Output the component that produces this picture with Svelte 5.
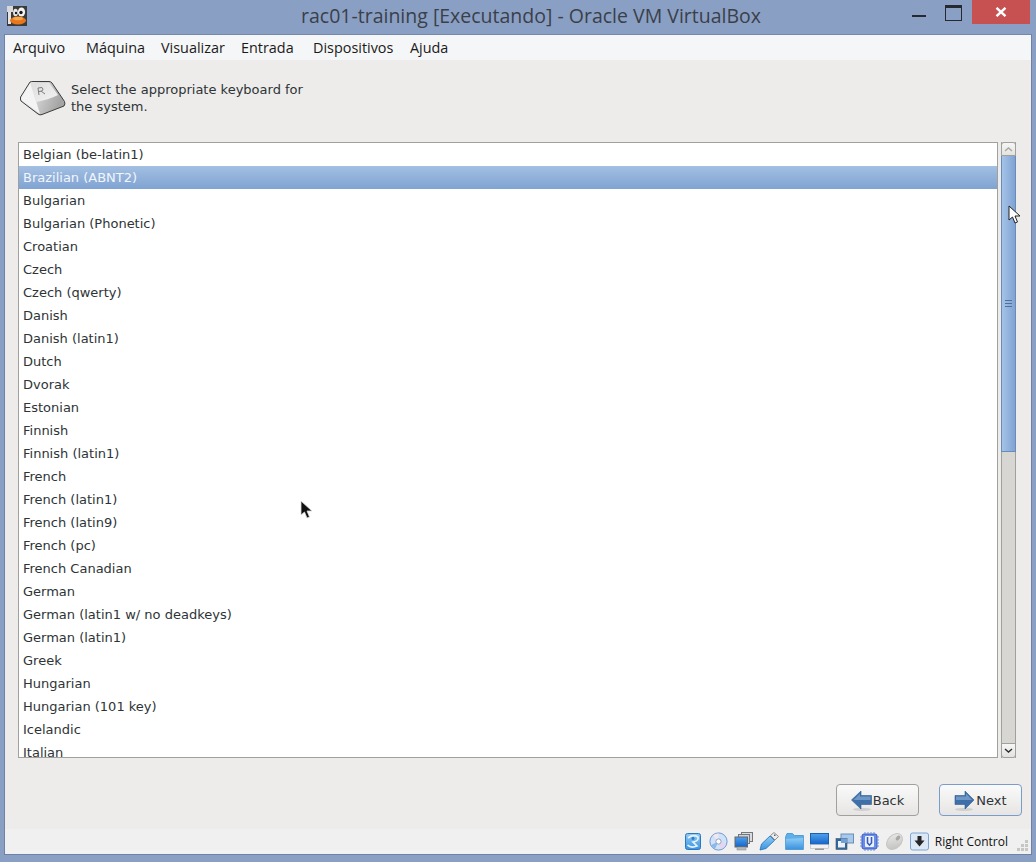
<script lang="ts">
    const layouts = [
        "Belgian (be-latin1)", "Brazilian (ABNT2)", "Bulgarian", "Bulgarian (Phonetic)", "Croatian",
        "Czech", "Czech (qwerty)", "Danish", "Danish (latin1)", "Dutch", "Dvorak", "Estonian", "Finnish",
        "Finnish (latin1)", "French", "French (latin1)", "French (latin9)", "French (pc)", "French Canadian",
        "German", "German (latin1 w/ no deadkeys)", "German (latin1)", "Greek", "Hungarian",
        "Hungarian (101 key)", "Icelandic", "Italian",
    ];
    const menus = [
        { label: "Arquivo", width: 73 },
        { label: "Máquina", width: 75 },
        { label: "Visualizar", width: 80 },
        { label: "Entrada", width: 72 },
        { label: "Dispositivos", width: 97 },
        { label: "Ajuda", width: 50 },
    ];
    let selected = $state(1);
</script>

<div class="frame">
    <header class="titlebar">
        <svg class="app-icon" width="20" height="20" viewBox="0 0 20 20">
            <rect width="20" height="20" fill="#3a3a38" />
            <rect x="0" y="0" width="6" height="6" fill="#d8d8d8" />
            <rect x="1" y="6" width="3" height="12" fill="#e4e4e4" />
            <ellipse cx="14.5" cy="6" rx="3.6" ry="4.6" fill="#f4f4f4" />
            <ellipse cx="8.5" cy="6.5" rx="2.4" ry="3.8" fill="#e8e8e8" />
            <circle cx="14" cy="6.5" r="1.7" fill="#181818" />
            <circle cx="9" cy="7" r="1.2" fill="#181818" />
            <ellipse cx="11" cy="14.5" rx="8" ry="4" fill="#e8761c" />
            <ellipse cx="11" cy="12.5" rx="5" ry="1.8" fill="#f7a64a" />
        </svg>
        <span class="window-title">rac01-training [Executando] - Oracle VM VirtualBox</span>
        <div class="window-controls">
            <span class="ctl-min"></span>
            <span class="ctl-max"></span>
            <span class="ctl-close">
                <svg width="12" height="10" viewBox="0 0 12 10">
                    <path d="M1.5 0.8 L10.5 9.2 M10.5 0.8 L1.5 9.2" stroke="#fff" stroke-width="2.4" fill="none" />
                </svg>
            </span>
        </div>
    </header>

    <div class="client">
        <nav class="menubar">
            {#each menus as m}
                <span class="menu-item" style="width: {m.width}px">{m.label}</span>
            {/each}
        </nav>

        <main class="installer">
            <div class="prompt">
                <svg class="key-icon" width="46" height="36" viewBox="0 0 46 36">
                    <defs>
                        <linearGradient id="keyTop" x1="0" y1="0" x2="1" y2="1">
                            <stop offset="0" stop-color="#dcdcdc" />
                            <stop offset="1" stop-color="#f4f4f4" />
                        </linearGradient>
                        <linearGradient id="keyFront" x1="0" y1="0" x2="1" y2="0.3">
                            <stop offset="0" stop-color="#fafafa" />
                            <stop offset="1" stop-color="#a4a4a4" />
                        </linearGradient>
                    </defs>
                    <path d="M0.6 16 L10 1 Q11 0.5 13 0.5 L29 0.5 Q31 0.5 32 2 L44.5 20.5 Q45.5 23 44 25 L22 33.5 Q20 34.5 18 33 L1 20 Q0 18 0.6 16 Z" fill="url(#keyFront)" stroke="#3c3c3c" stroke-width="1" />
                    <path d="M1.5 17 L10.5 2 L16 20 L20 33 L2 19.5 Z" fill="#f4f4f4" />
                    <path d="M10.5 2.5 L29 1.5 L38 14 Q28 19 16 21 Z" fill="url(#keyTop)" />
                    <path d="M18 7 L19 14 M18 7 L22 6.5 Q24 8 22 10 L18.6 10.6 M21 10 L25 13" stroke="#7c7c7c" stroke-width="1" fill="none" />
                </svg>
                <p>Select the appropriate keyboard for<br />the system.</p>
            </div>

            <div class="list-row">
                <ul class="layout-list">
                    {#each layouts as name, i}
                        <li class:selected={i === selected}>
                            <button onclick={() => (selected = i)}>{name}</button>
                        </li>
                    {/each}
                </ul>
                <div class="scrollbar">
                    <div class="step up">
                        <svg width="9" height="5" viewBox="0 0 9 5"><path d="M1 4 L4.5 1 L8 4" stroke="#a8a8a4" stroke-width="1.4" fill="none" /></svg>
                    </div>
                    <div class="thumb">
                        <span class="grip"></span>
                    </div>
                    <div class="trough"></div>
                    <div class="step down">
                        <svg width="9" height="5" viewBox="0 0 9 5"><path d="M1 1 L4.5 4 L8 1" stroke="#2e2e2e" stroke-width="1.4" fill="none" /></svg>
                    </div>
                </div>
            </div>

            <div class="actions">
                <button class="btn">
                    <svg width="21" height="21" viewBox="0 0 21 21">
                        <ellipse cx="11" cy="19.4" rx="9" ry="1.5" fill="#cfcfcd" />
                        <path d="M0.5 10 L10 1 L10 5.5 L20.5 5.5 L20.5 14.5 L10 14.5 L10 19 Z" fill="#3e6fa8" stroke="#2f5a90" stroke-width="0.6" />
                        <path d="M2.5 10 L9 3.5 L9 6.5 L19.5 6.5 L19.5 10 Z" fill="#6f97c6" />
                    </svg>
                    Back
                </button>
                <button class="btn focused">
                    <svg width="21" height="21" viewBox="0 0 21 21">
                        <ellipse cx="10" cy="19.4" rx="9" ry="1.5" fill="#cfcfcd" />
                        <path d="M20 10 L11 1 L11 5.5 L1 5.5 L1 14.5 L11 14.5 L11 19 Z" fill="#3e6fa8" stroke="#2f5a90" stroke-width="0.6" />
                        <path d="M2 6.5 L12 6.5 L12 3.5 L18 10 L2 10 Z" fill="#6f97c6" />
                    </svg>
                    Next
                </button>
            </div>
        </main>

        <footer class="statusbar">
            <div class="tray">
                <svg width="19" height="19" viewBox="0 0 19 19">
                    <defs>
                        <linearGradient id="skyV" x1="0" y1="0" x2="0" y2="1">
                            <stop offset="0" stop-color="#8ecbf6" />
                            <stop offset="1" stop-color="#3d94e0" />
                        </linearGradient>
                        <linearGradient id="deepV" x1="0" y1="0" x2="0" y2="1">
                            <stop offset="0" stop-color="#4fa0ee" />
                            <stop offset="1" stop-color="#1464c8" />
                        </linearGradient>
                        <linearGradient id="greyD" x1="0" y1="0" x2="1" y2="1">
                            <stop offset="0" stop-color="#eeeeec" />
                            <stop offset="1" stop-color="#bcbcba" />
                        </linearGradient>
                    </defs>
                    <rect x="1.5" y="1.5" width="15" height="16" rx="2" fill="url(#skyV)" stroke="#2a78bd" />
                    <path d="M4 6 Q9 2 14 5 Q15 9 9 10 L13 14 Q7 16.5 3.5 13" stroke="#e8f2fb" stroke-width="1.7" fill="none" />
                    <circle cx="9" cy="6.5" r="1.4" fill="#2a78bd" />
                </svg>
                <svg width="19" height="19" viewBox="0 0 19 19">
                    <circle cx="9.5" cy="9.5" r="8.6" fill="#cfe2f8" stroke="#6e97cf" />
                    <path d="M9.5 9.5 L4 3.5 A8 8 0 0 1 9.5 1.5 Z" fill="#f4e6f0" />
                    <path d="M9.5 9.5 L17 12 A8 8 0 0 1 12 17 Z" fill="#e6d4f0" />
                    <path d="M9.5 9.5 L2 13 A8 8 0 0 0 6 17 Z" fill="#8fb8ea" />
                    <circle cx="9.5" cy="9.5" r="2.6" fill="#fff" stroke="#7b8fb0" stroke-width="0.8" />
                </svg>
                <svg width="19" height="19" viewBox="0 0 19 19">
                    <rect x="7.5" y="0.5" width="11" height="9" fill="#d8dde2" stroke="#777" />
                    <rect x="4.5" y="2.5" width="11" height="9" fill="#c8d4e0" stroke="#777" />
                    <rect x="1" y="5" width="12.5" height="10" fill="url(#deepV)" stroke="#666" />
                    <rect x="3" y="15" width="9" height="3" fill="#b8b8b8" stroke="#888" stroke-width="0.5" />
                </svg>
                <svg width="20" height="19" viewBox="0 0 20 19">
                    <path d="M1 18 L2.5 12 L11 4 L15.5 8.5 L7 16.5 Z" fill="url(#skyV)" stroke="#1f6fb5" stroke-width="0.8" />
                    <path d="M11.5 3.5 L15 0.5 L19.5 4.5 L16 8 Z" fill="#ececec" stroke="#777" stroke-width="0.8" />
                    <rect x="15" y="2.5" width="1.5" height="1.5" fill="#666" />
                </svg>
                <svg width="19" height="19" viewBox="0 0 19 19">
                    <path d="M0.6 5 L0.6 17.5 L18.4 17.5 L18.4 3.5 L9.5 3.5 L7.5 1.5 L2 1.5 Z" fill="#5fb0ea" stroke="#3d8fd0" stroke-width="0.8" />
                    <path d="M1 7 L18 6 L18 17 L1 17 Z" fill="url(#skyV)" />
                </svg>
                <svg width="19" height="19" viewBox="0 0 19 19">
                    <rect x="0.5" y="1.5" width="18" height="11" fill="url(#deepV)" stroke="#1662b0" />
                    <rect x="0.5" y="12.5" width="18" height="4" fill="#f2f2f2" stroke="#b8b8b8" stroke-width="0.6" />
                    <rect x="5" y="16.5" width="9" height="1.5" fill="#9a9a9a" />
                </svg>
                <svg width="19" height="19" viewBox="0 0 19 19">
                    <rect x="6" y="2" width="12.5" height="9" fill="#a8c8ec" stroke="#6a90b8" />
                    <rect x="1" y="6.5" width="11" height="11" fill="#2a68a8" stroke="#555" stroke-width="0.6" />
                    <rect x="3" y="9" width="7" height="6.5" fill="#eef2f6" />
                    <rect x="6" y="6.5" width="6" height="4.5" fill="#6fa0d8" />
                </svg>
                <svg width="19" height="19" viewBox="0 0 19 19">
                    <rect x="2" y="2" width="15" height="15" rx="2" fill="#6a8ce8" stroke="#3a5cb8" />
                    <path d="M5 0 V19 M8 0 V19 M11 0 V19 M14 0 V19 M0 5 H19 M0 8 H19 M0 11 H19 M0 14 H19" stroke="#6f8fe6" stroke-width="1" stroke-dasharray="2 15" />
                    <rect x="5" y="4" width="9" height="11" rx="1" fill="#eef3ff" />
                    <path d="M7.5 5 V11 L9.5 13 L11.5 11 V5" stroke="#3a5cb8" stroke-width="1.6" fill="none" />
                </svg>
                <svg width="19" height="19" viewBox="0 0 19 19">
                    <ellipse cx="9.5" cy="9.5" rx="6.5" ry="9.2" transform="rotate(45 9.5 9.5)" fill="url(#greyD)" stroke="#c4c4c2" />
                    <ellipse cx="13" cy="6" rx="1.8" ry="2.8" transform="rotate(45 13 6)" fill="#a8a8a8" />
                </svg>
                <svg width="19" height="19" viewBox="0 0 19 19">
                    <rect x="0.5" y="1" width="18" height="17" rx="2" fill="#dce8f6" stroke="#7da4d4" />
                    <path d="M7.5 4 H11.5 V8.5 H14.5 L9.5 14.5 L4.5 8.5 H7.5 Z" fill="#262626" />
                </svg>
                <span class="host-key">Right Control</span>
                <svg class="grip-corner" width="12" height="12" viewBox="0 0 12 12"><g fill="#c6c6c4"><rect x="8" y="0" width="3" height="3" /><rect x="4" y="4" width="3" height="3" /><rect x="8" y="4" width="3" height="3" /><rect x="0" y="8" width="3" height="3" /><rect x="4" y="8" width="3" height="3" /><rect x="8" y="8" width="3" height="3" /></g></svg>
            </div>
        </footer>
    </div>

    <svg class="cursor vm-cursor" width="13" height="20" viewBox="0 0 13 20">
        <path d="M1 1 L1 15 L4.5 12 L7 18 L9.5 17 L7 11 L12 11 Z" fill="#fff" stroke="#222" stroke-width="1" />
    </svg>
    <svg class="cursor guest-cursor" width="14" height="20" viewBox="0 0 14 20">
        <path d="M1 1 L1 15 L4.5 12 L7 18 L9.5 17 L7 11 L12 11 Z" fill="#111" stroke="#ddd" stroke-width="0.8" />
    </svg>
</div>

<style>
    :global(body) {
        margin: 0;
        background: #fff;
    }
    .frame {
        position: relative;
        width: 1036px;
        height: 862px;
        box-sizing: border-box;
        background: #8a9fc4;
        padding: 0 4px 7px;
        display: flex;
        flex-direction: column;
        overflow: hidden;
    }
    .titlebar {
        position: relative;
        height: 34px;
        flex: none;
        margin: 0 -4px;
        display: flex;
        align-items: flex-start;
    }
    .app-icon {
        position: absolute;
        left: 7px;
        top: 6px;
    }
    .window-title {
        width: 100%;
        text-align: center;
        font-family: "Open Sans", sans-serif;
        font-size: 19.5px;
        line-height: 32px;
        color: #3a3f4a;
        padding-left: 26px;
        box-sizing: border-box;
    }
    .window-controls {
        position: absolute;
        right: 6px;
        top: 0;
        display: flex;
    }
    .ctl-min {
        width: 14px;
        height: 2px;
        margin: 15px 19px 0 0;
        background: #26292f;
    }
    .ctl-max {
        width: 15px;
        height: 12px;
        margin: 5px 10px 0 0;
        border: 1px solid #26292f;
        border-top-width: 3px;
    }
    .ctl-close {
        width: 58px;
        height: 24px;
        background: #c75050;
        display: flex;
        align-items: center;
        justify-content: center;
    }
    .client {
        flex: 1;
        min-height: 0;
        display: flex;
        flex-direction: column;
        border: 1px solid #6f82a6;
        border-top-color: #7488ac;
    }
    .menubar {
        height: 25px;
        flex: none;
        background: #f5f6f7;
        display: flex;
        padding-left: 8px;
        font-family: "Open Sans", sans-serif;
        font-size: 14.4px;
        line-height: 25px;
        color: #1a1a1a;
    }
    .menu-item {
        display: block;
    }
    .installer {
        flex: 1;
        min-height: 0;
        background: #edecea;
        padding: 0 9px 0 13px;
        display: flex;
        flex-direction: column;
        font-family: "DejaVu Sans", sans-serif;
        font-size: 13px;
        color: #2e3436;
    }
    .prompt {
        height: 82px;
        flex: none;
        display: flex;
        align-items: flex-start;
        box-sizing: border-box;
        padding: 21px 0 0 2px;
    }
    .key-icon {
        flex: none;
        margin-right: 5px;
    }
    .prompt p {
        margin: 0;
        line-height: 17px;
    }
    .list-row {
        height: 616px;
        flex: none;
        display: flex;
    }
    .layout-list {
        width: 980px;
        box-sizing: border-box;
        margin: 0;
        padding: 0;
        list-style: none;
        background: #fff;
        border: 1px solid #a0a09c;
        overflow: hidden;
    }
    .layout-list li {
        height: 23px;
    }
    .layout-list button {
        display: block;
        width: 100%;
        height: 23px;
        border: 0;
        background: none;
        padding: 0 0 0 4px;
        text-align: left;
        font: inherit;
        line-height: 23px;
        color: inherit;
    }
    .layout-list li.selected {
        background: linear-gradient(#a3bfe2, #7fa3d2);
    }
    .layout-list li.selected button {
        color: #f2f5fa;
    }
    .scrollbar {
        width: 15px;
        margin-left: 3px;
        box-sizing: border-box;
        display: flex;
        flex-direction: column;
        background: #d8d6d2;
        border-left: 1px solid #a0a09c;
        border-right: 1px solid #a0a09c;
    }
    .step {
        flex: none;
        box-sizing: border-box;
        background: linear-gradient(#f6f6f5, #e4e3e0);
        display: flex;
        align-items: center;
        justify-content: center;
        margin: 0 -1px;
        border: 1px solid #a0a09c;
    }
    .step.up {
        height: 14px;
        border-radius: 3px 3px 0 0;
    }
    .step.down {
        height: 15px;
        border-radius: 0 0 3px 3px;
    }
    .thumb {
        height: 296px;
        box-sizing: border-box;
        flex: none;
        margin: 0 -1px;
        border: 1px solid #6a8ab8;
        border-top: 0;
        background: linear-gradient(90deg, #a6c3e8, #7ea3d3);
        position: relative;
    }
    .grip {
        position: absolute;
        left: 3px;
        top: 144px;
        width: 7px;
        height: 5px;
        border-top: 1px solid #4f6f9c;
        border-bottom: 1px solid #4f6f9c;
    }
    .grip::after {
        content: "";
        position: absolute;
        left: 0;
        right: 0;
        top: 2px;
        height: 1px;
        background: #4f6f9c;
    }
    .actions {
        flex: 1;
        display: flex;
        justify-content: flex-end;
        gap: 20px;
        padding-top: 26px;
    }
    .trough {
        flex: 1;
    }
    .btn {
        width: 83px;
        height: 32px;
        box-sizing: border-box;
        border: 1px solid #a0a09c;
        border-radius: 4px;
        background: linear-gradient(#fafafa, #e6e5e3);
        font: inherit;
        color: #2e3436;
        display: flex;
        align-items: center;
        justify-content: center;
        gap: 1px;
        padding: 0;
    }
    .btn.focused {
        border-color: #7a9cc9;
    }
    .statusbar {
        height: 25px;
        flex: none;
        background: #f0f0f0;
        display: flex;
        justify-content: flex-end;
    }
    .tray {
        display: flex;
        align-items: center;
        gap: 6px;
        padding-right: 2px;
    }
    .host-key {
        font-family: "Open Sans", sans-serif;
        font-size: 12px;
        color: #111;
    }
    .grip-corner {
        margin-top: 8px;
        margin-left: 3px;
    }
    .cursor {
        position: absolute;
    }
    .vm-cursor {
        left: 1008px;
        top: 205px;
    }
    .guest-cursor {
        left: 300px;
        top: 500px;
    }
</style>
